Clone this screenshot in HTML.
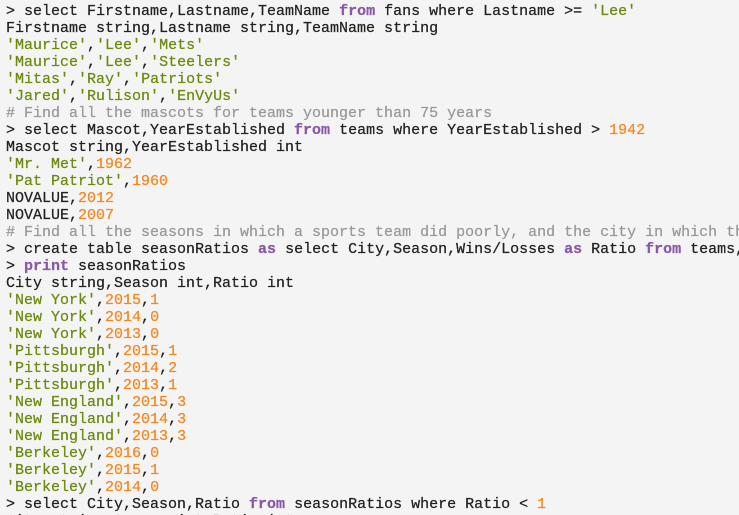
<!DOCTYPE html>
<html><head><meta charset="utf-8"><style>
html,body{margin:0;padding:0;background:#f4f4f4;width:739px;height:515px;overflow:hidden}
pre{margin:0;padding:3px 0 0 6px;width:733px;height:512px;overflow:hidden;font-family:"Liberation Mono",monospace;font-size:15px;line-height:17px;color:#222;white-space:pre;-webkit-text-stroke:0.25px}
.s{color:#6b8a0f}.n{color:#f5871f}.k{color:#8959a8;font-weight:bold}.c{color:#999}
</style></head><body><pre>&gt; select Firstname,Lastname,TeamName <span class="k">from</span> fans where Lastname &gt;= <span class="s">'Lee'</span>
Firstname string,Lastname string,TeamName string
<span class="s">'Maurice'</span>,<span class="s">'Lee'</span>,<span class="s">'Mets'</span>
<span class="s">'Maurice'</span>,<span class="s">'Lee'</span>,<span class="s">'Steelers'</span>
<span class="s">'Mitas'</span>,<span class="s">'Ray'</span>,<span class="s">'Patriots'</span>
<span class="s">'Jared'</span>,<span class="s">'Rulison'</span>,<span class="s">'EnVyUs'</span>
<span class="c"># Find all the mascots for teams younger than 75 years</span>
&gt; select Mascot,YearEstablished <span class="k">from</span> teams where YearEstablished &gt; <span class="n">1942</span>
Mascot string,YearEstablished int
<span class="s">'Mr. Met'</span>,<span class="n">1962</span>
<span class="s">'Pat Patriot'</span>,<span class="n">1960</span>
NOVALUE,<span class="n">2012</span>
NOVALUE,<span class="n">2007</span>
<span class="c"># Find all the seasons in which a sports team did poorly, and the city in which they play</span>
&gt; create table seasonRatios <span class="k">as</span> select City,Season,Wins/Losses <span class="k">as</span> Ratio <span class="k">from</span> teams,
&gt; <span class="k">print</span> seasonRatios
City string,Season int,Ratio int
<span class="s">'New York'</span>,<span class="n">2015</span>,<span class="n">1</span>
<span class="s">'New York'</span>,<span class="n">2014</span>,<span class="n">0</span>
<span class="s">'New York'</span>,<span class="n">2013</span>,<span class="n">0</span>
<span class="s">'Pittsburgh'</span>,<span class="n">2015</span>,<span class="n">1</span>
<span class="s">'Pittsburgh'</span>,<span class="n">2014</span>,<span class="n">2</span>
<span class="s">'Pittsburgh'</span>,<span class="n">2013</span>,<span class="n">1</span>
<span class="s">'New England'</span>,<span class="n">2015</span>,<span class="n">3</span>
<span class="s">'New England'</span>,<span class="n">2014</span>,<span class="n">3</span>
<span class="s">'New England'</span>,<span class="n">2013</span>,<span class="n">3</span>
<span class="s">'Berkeley'</span>,<span class="n">2016</span>,<span class="n">0</span>
<span class="s">'Berkeley'</span>,<span class="n">2015</span>,<span class="n">1</span>
<span class="s">'Berkeley'</span>,<span class="n">2014</span>,<span class="n">0</span>
&gt; select City,Season,Ratio <span class="k">from</span> seasonRatios where Ratio &lt; <span class="n">1</span>
City string,Season int,Ratio int
</pre></body></html>
